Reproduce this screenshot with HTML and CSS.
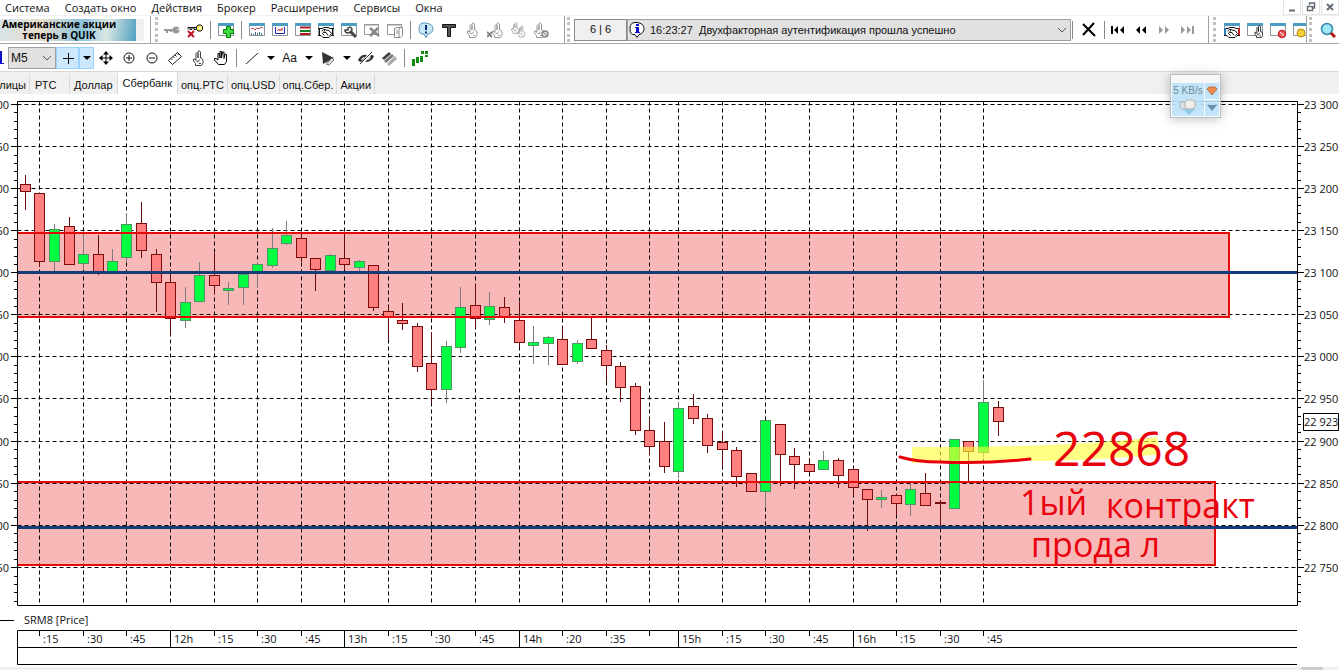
FILE: index.html
```html
<!DOCTYPE html>
<html lang="ru">
<head>
<meta charset="utf-8">
<title>QUIK</title>
<link rel="stylesheet" href="styles.css">
</head>
<body>
<svg class="sprite" aria-hidden="true">
  <defs>
    <symbol id="hand" viewBox="0 0 16 16"><path d="M5.500 15.500V13.500L3.500 11V9H5l1 1.500V3.500L7 2.500l1 1V8M8 8V2l1-1.500L10.500 2v6M10.500 8l1.500.500 1 1.500v3l-1.500 2.500h-6M6.500 11.500h2l1-2M9 13.500h2" fill="#fff" stroke="currentColor"/></symbol>
    <symbol id="win" viewBox="0 0 16 16"><path d="M.5 1.500h15v12H.5z" fill="#fff" stroke="#8b9298"/><path d="M0 1h16v3H0z" fill="#4d9cc4"/></symbol>
    <symbol id="shake" viewBox="0 0 16 16"><path d="M1 6h14v9H1z" fill="#fff"/><path d="M0 6.500h4l2-1h4l2 1h4M0 13.500h3l2 2h6l2-2h3M3.500 9l2-1.500h2L4.500 11.500l2 2M8 8l3 .5 2.500 3-2 2M6 10.500h2l2 3M1.500 7v6M14.500 7v6" fill="none" stroke="#111"/></symbol>
    <symbol id="down" viewBox="0 0 8 8"><path d="M0 2h8L4 6z"/></symbol>
    <symbol id="chev" viewBox="0 0 10 10"><path d="M1 3l4 4 4-4" fill="none" stroke="#555"/></symbol>
  </defs>
</svg>

<header class="menubar">
  <nav class="menu">
    <button>Система</button><button>Создать окно</button><button>Действия</button><button>Брокер</button><button>Расширения</button><button>Сервисы</button><button>Окна</button>
  </nav>
  <div class="winctl">
    <button aria-label="Свернуть"><svg viewBox="0 0 10 10"><path d="M2 8.500h6" stroke="#666e78" stroke-width="2"/></svg></button>
    <button aria-label="Восстановить"><svg viewBox="0 0 10 10"><path d="M3.500 3V1h5v5H6.500M1.500 4.500h5v4h-5z" fill="none" stroke="#666e78" stroke-width="1.500"/></svg></button>
    <button aria-label="Закрыть"><svg viewBox="0 0 10 10"><path d="M2 2l6 6M8 2L2 8" stroke="#666e78" stroke-width="2"/></svg></button>
  </div>
</header>

<div class="bar">
  <section class="panel banner-panel">
    <a class="banner" href="#">Американские акции<br>теперь в QUIK</a>
  </section>
  <section class="panel windows">
    <i class="grip"></i>
    <button class="tool" aria-label="Ключ"><svg viewBox="0 0 16 16"><path d="M0 7h10v2H8v1H6V9H4v2H2V9H0z" fill="#999"/><circle cx="12" cy="8" r="3.500" fill="#999"/><path d="M13 7h2v1h-2z" fill="#eee"/></svg></button>
    <button class="tool" aria-label="Отключить"><svg viewBox="0 0 16 16"><path d="M1 7.500V5.500h9M1 5.500h2v2h2v-2h2v2h2" fill="none" stroke="#111"/><path d="M9.500 4.500l1.500-1.500h3l1.500 1.500v3L14 9h-3L9.500 7.500z" fill="#f5ee5a" stroke="#111"/><path d="M12 5h2v2h-2z" fill="#fff"/><path d="M1 9l6 6M7 9l-6 6" stroke="#c01020" stroke-width="2"/></svg></button>
    <i class="sep"></i>
    <button class="tool" aria-label="Создать"><svg viewBox="0 0 16 16"><use href="#win"/><path d="M8.500 4.500h4v3h3v4h-3v4h-4v-4h-3v-4h3z" fill="#3fdc3f" stroke="#087808"/></svg></button>
    <i class="sep"></i>
    <button class="tool" aria-label="График"><svg viewBox="0 0 16 16"><use href="#win"/><path d="M2 7l2-1 2 2 2-2 2 1 2-2 2 1" fill="none" stroke="#b44"/><path d="M2.500 13v-2M4.500 13v-1M6.500 13v-3M8.500 13v-2M10.500 13v-3M12.500 13v-2" stroke="#3a6f90"/></svg></button>
    <button class="tool" aria-label="Диаграмма"><svg viewBox="0 0 16 16"><use href="#win"/><path d="M3.500 5v6.500h9V5" fill="none" stroke="#22b"/><path d="M5 9l2-2 1 2 2-3v3" fill="none" stroke="#c33"/></svg></button>
    <button class="tool" aria-label="Таблица"><svg viewBox="0 0 16 16"><use href="#win"/><path d="M5 5.500h10M5 12h10" stroke="#b01818" stroke-width="2"/><path d="M5 9h10" stroke="#108020" stroke-width="2"/></svg></button>
    <button class="tool" aria-label="Сделки"><svg viewBox="0 0 16 16"><use href="#win"/><use href="#shake"/></svg></button>
    <button class="tool" aria-label="Настройка"><svg viewBox="0 0 16 16"><use href="#win"/><path d="M9 9l6 6" stroke="#444" stroke-width="3"/><path d="M7 5v3h-3q0 3 3 3 4 0 4-4-1-2-3-2" fill="none" stroke="#444" stroke-width="1.500"/></svg></button>
    <button class="tool dim" aria-label="Удалить окно"><svg viewBox="0 0 16 16"><path d="M.5 2.500h14v10H.5zM0 3h15" fill="none" stroke="#999"/><path d="M6 6l9 8M14 6l-8 8" stroke="#888" stroke-width="2.500"/></svg></button>
    <button class="tool dim" aria-label="Копировать окно"><svg viewBox="0 0 16 16"><path d="M.5 2.500h14v10H.5zM0 3h15" fill="none" stroke="#999"/><path d="M7.500 6.500l3-1h5v8l-2 2h-6zM12 6v9M9 9h2M9 11h2" fill="#fff" stroke="#888"/></svg></button>
    <i class="sep"></i>
    <button class="tool" aria-label="Сообщения"><svg viewBox="0 0 16 16"><path d="M6 12l2 3.500 2-3.500q5-1 5-5.500T8 1 1 6.500 6 12z" fill="#c9e8fa" stroke="#5a94b8"/><path d="M8 3v5M8 9.500v2" stroke="#0a2670" stroke-width="2"/></svg></button>
    <button class="tool" aria-label="Текст"><svg viewBox="0 0 16 16"><path d="M1.500 2.500h13v3h-5v9h-3v-9h-5z" fill="#555" stroke="#111"/></svg></button>
    <button class="tool dim" aria-label="Заявка"><svg viewBox="0 0 16 16"><use href="#hand"/></svg></button>
    <button class="tool dim" aria-label="Снять заявку"><svg viewBox="0 0 16 16"><use href="#hand" x="2"/><path d="M0 10l5 5M5 10l-5 5" stroke="#888" stroke-width="2"/></svg></button>
    <button class="tool dim" aria-label="Две заявки"><svg viewBox="0 0 16 16"><use href="#hand" x="-1" y="0" width="12" height="12"/><use href="#hand" x="5" y="3" width="12" height="13"/></svg></button>
    <button class="tool dim" aria-label="Запрет заявок"><svg viewBox="0 0 16 16"><use href="#hand" x="-2"/><circle cx="12" cy="12" r="3" fill="#ddd" stroke="#888" stroke-width="1.500"/><path d="M10 10l4 4" stroke="#888"/></svg></button>
  </section>
  <section class="panel messages">
    <i class="grip"></i>
    <output class="counter">6 | 6</output>
    <div class="pick log">
      <select aria-label="Сообщения системы"><option>16:23:27&nbsp; Двухфакторная аутентификация прошла успешно</option></select>
      <svg class="info" viewBox="0 0 16 16"><path d="M6 12.500l2 3 2-3q5-1 5-6T8 .5 1 6.500t5 6z" fill="#fff" stroke="#111"/><path d="M7 2h3v2H7zM6 5h4v5h1v1H6v-1h1V6H6z" fill="#11c"/></svg>
      <svg class="chev"><use href="#chev"/></svg>
    </div>
    <i class="sep thin"></i>
    <button class="tool wide" aria-label="Очистить"><svg viewBox="0 0 16 16"><path d="M2 2l12 12M13 1L2 13" stroke="#000" stroke-width="2"/></svg></button>
    <i class="sep thin"></i>
    <button class="tool" aria-label="В начало"><svg viewBox="0 0 16 16"><path d="M1 4h2v8H1zM8 4v8L4 8zM14 4v8l-4-4z"/></svg></button>
    <button class="tool" aria-label="Назад"><svg viewBox="0 0 16 16"><path d="M7 4v8L3 8zM13 4v8L9 8z"/></svg></button>
    <button class="tool" aria-label="Вперёд"><svg viewBox="0 0 16 16"><path d="M3 4v8l4-4zM9 4v8l4-4z" fill="#999"/></svg></button>
    <button class="tool" aria-label="В конец"><svg viewBox="0 0 16 16"><path d="M2 4v8l4-4zM8 4v8l4-4zM13 4h2v8h-2z" fill="#999"/></svg></button>
  </section>
  <section class="panel trade">
    <i class="grip"></i>
    <button class="tool" aria-label="Сделки клиента"><svg viewBox="0 0 16 16"><use href="#win"/><use href="#shake"/><path d="M0 6h2v7H0z" fill="#2b7fb0"/><path d="M14 6h2v7h-2z" fill="#c22"/></svg></button>
    <button class="tool" aria-label="Заявки клиента"><svg viewBox="0 0 16 16"><use href="#win"/><use href="#hand" x="5" y="3" width="13" height="13"/></svg></button>
    <button class="tool" aria-label="Запреты"><svg viewBox="0 0 16 16"><use href="#win"/><circle cx="12" cy="12" r="3.500" fill="#e66" stroke="#c22" stroke-width="1.500"/><path d="M10 10l4 4" stroke="#fff"/></svg></button>
    <button class="tool cut" aria-label="Лимиты"><svg viewBox="0 0 16 16"><use href="#win"/><circle cx="8" cy="11" r="4" fill="#f5cf3a" stroke="#b8860b"/></svg></button>
  </section>
  <section class="panel last">
    <i class="grip"></i>
    <button class="tool" aria-label="Поиск"><svg viewBox="0 0 16 16"><circle cx="7" cy="7" r="5.500" fill="#9fe6f7" stroke="#3788a8" stroke-width="1.500"/><path d="M11 11l4 4" stroke="#b01010" stroke-width="3"/></svg></button>
  </section>
</div>

<div class="bar second">
  <i class="stub"></i>
  <div class="pick period">
    <select aria-label="Интервал"><option>M5</option></select>
    <svg class="chev"><use href="#chev"/></svg>
  </div>
  <button class="tool on" aria-label="Перекрестие"><svg viewBox="0 0 16 16"><path d="M8.500 3v11M3 8.500h11" stroke="#000"/></svg></button>
  <button class="drop on" aria-label="Вид курсора"><svg><use href="#down"/></svg></button>
  <button class="tool" aria-label="Переместить"><svg viewBox="0 0 16 16"><path d="M8 2v12M2 8h12" stroke="#000"/><path d="M8 1L5 4.500h6zM8 15l-3-3.500h6zM1 8l3.500-3v6zM15 8l-3.500-3v6z"/></svg></button>
  <button class="tool" aria-label="Увеличить"><svg viewBox="0 0 16 16"><circle cx="8" cy="8" r="5" fill="none" stroke="#111"/><path d="M5 8h6M8 5v6" stroke="#111"/></svg></button>
  <button class="tool" aria-label="Уменьшить"><svg viewBox="0 0 16 16"><circle cx="8" cy="8" r="5" fill="none" stroke="#111"/><path d="M5 8h6" stroke="#111"/></svg></button>
  <button class="tool" aria-label="Линейка"><svg viewBox="0 0 16 16"><path d="M1.500 10.500l9-8 4 4-9 8zM4 8.500l1.500 1.500M6 6.500L7.500 8M8 5l1.500 1.500M10 3.500L11.500 5" fill="#fff" stroke="#222"/></svg></button>
  <button class="tool gray" aria-label="Указатель"><svg viewBox="0 0 16 16"><use href="#hand"/></svg></button>
  <button class="tool" aria-label="Рука"><svg viewBox="0 0 16 16"><path d="M5.500 14.500L1.500 10V8.500h1.500L5 10V3.500h1.500L7 8V1.500h1.500V8L9.500 2H11v6.500l1-4.500 1.500.5v7l-2 3z" fill="#fff" stroke="#000"/></svg></button>
  <i class="sep"></i>
  <button class="tool" aria-label="Линия"><svg viewBox="0 0 16 16"><path d="M2 14L14 3" stroke="#222"/></svg></button>
  <button class="drop" aria-label="Виды линий"><svg><use href="#down"/></svg></button>
  <button class="tool text">Aa</button>
  <button class="drop" aria-label="Виды подписей"><svg><use href="#down"/></svg></button>
  <button class="tool" aria-label="Фигура"><svg viewBox="0 0 16 16"><path d="M2 2l12 6-11 6z" fill="#333"/><path d="M6 14l6-6 2 2-5 5z" fill="#ddd" stroke="#777"/></svg></button>
  <button class="drop" aria-label="Виды фигур"><svg><use href="#down"/></svg></button>
  <button class="tool" aria-label="Скрыть"><svg viewBox="0 0 16 16"><path d="M0 10q3-6 9-5L5 10l-2 2q-2 0-3-2zM16 6q-2 6-9 6l5-5 1-2q2 0 3 1z" fill="#333"/><path d="M3 10q1-3 4-3L4 10zM9 10l4-3q-1 3-4 3z" fill="#fff"/><path d="M2 14L14 2" stroke="#333"/></svg></button>
  <button class="tool" aria-label="Удалить линии"><svg viewBox="0 0 16 16"><path d="M1 8l7-6 2 2-7 6z" fill="#444"/><path d="M3 11l8-7 2 2-8 7z" fill="#777"/><path d="M6 14l8-8 2 3-8 7z" fill="#aaa"/></svg></button>
  <i class="sep"></i>
  <button class="tool" aria-label="Свечи"><svg viewBox="0 0 16 16"><path d="M0 9h3v7H0zM4 7h3v6H4zM8 6h3v6H8zM9 1h3v3H9zM13 1h3v3h-3zM13 5h3v2h-3z" fill="#128a12"/></svg></button>
</div>

<nav class="tabs" aria-label="Вкладки">
  <button class="edge">Таблицы</button><button class="short">РТС</button><button class="mid">Доллар</button><button class="active" aria-current="page">Сбербанк</button><button>опц.РТС</button><button>опц.USD</button><button>опц.Сбер.</button><button>Акции</button>
</nav>

<main class="chart">
  <svg id="chart" viewBox="0 94 1339 573" role="img" aria-label="SRM8 [Price]"></svg>
</main>
<div class="scroll"><i></i></div>

<aside class="traffic">
  <span class="speed">5 KB/s
    <svg viewBox="0 0 18 16"><path d="M4 10h12l-6 6z" fill="#8ccbed"/><rect x="1" y="3" width="8" height="7" rx="2" fill="#dde3e8" stroke="#a8b4bd"/><rect x="6" y="1" width="10" height="9" rx="3" fill="#f1eeea" stroke="#b2b2b2"/></svg>
  </span>
  <button aria-label="Сеть"><svg viewBox="0 0 12 10"><path d="M1 3l2-2h6l2 2-5 6z" fill="#ef8a48" stroke="#b8714a"/></svg></button>
  <button aria-label="Меню"><svg viewBox="0 0 12 10"><path d="M1 2h10L6 8z" fill="#6691ab"/></svg></button>
</aside>
<script src="chart.js"></script>
</body>
</html>
```
FILE: styles.css
```css
* { box-sizing: border-box; }
body { margin: 0; background: #fff; color: #111; font: 11px/14px "Liberation Sans", Arial, sans-serif; position: relative; overflow-x: hidden; }
button { border: 0; background: none; padding: 0; margin: 0; font: inherit; color: inherit; }
select { appearance: none; border: 1px solid #a0a0a0; border-radius: 0; background: #e1e1e1; font: inherit; color: #111; width: 100%; height: 22px; grid-area: 1 / 1; }
.sprite { position: absolute; width: 0; height: 0; }

.menubar { display: flex; justify-content: space-between; height: 15px; }
.menu { display: flex; gap: 15px; padding-left: 5px; font: 11px/15px "Open Sans", "Noto Sans", sans-serif; }
.winctl { display: flex; gap: 1px; }
.winctl button { width: 18px; border: 1px solid #e4e4e4; border-top: 0; display: grid; place-items: center; }
.winctl svg { width: 10px; height: 10px; }

.bar { display: flex; height: 29px; background: #fff; border-top: 1px solid #f0f0f0; border-bottom: 1px solid #a8a8a8; }
.second { height: 28px; border-top: 0; border-bottom-color: #d8d8d8; align-items: center; }
.panel { display: flex; align-items: center; border-right: 1px solid #a0a0a0; padding-right: 10px; flex: none; }
.banner-panel { padding-right: 6px; margin-right: 2px; }
.banner { width: 144px; height: 22px; border-right: 8px solid #f0f0f0; background: linear-gradient(100deg, #d5e4ea, #e9ddce 30%, #8cc3dc 60%, #d9e6e4 78%, #4f9fbf); color: #000; text-decoration: none; text-align: center; font: bold 10px/11px "Open Sans", sans-serif; white-space: nowrap; padding-right: 18px; }
.grip { width: 3px; height: 25px; margin: 0 4px 0 2px; border-left: 3px dotted #c0c0c0; flex: none; }
.windows { padding-right: 12px; }
.windows .grip { margin-right: 2px; }
.sep { width: 1px; height: 18px; margin: 0 3px 0 4px; background: #8a8a8a; flex: none; }
.thin { margin: 0 1px; }
.tool { width: 23px; height: 23px; display: grid; place-items: center; flex: none; }
.tool svg { width: 16px; height: 16px; }
.wide { width: 29px; }
.text { font-size: 12px; }
.dim { color: #999; }
.gray { color: #444; }
.cut { width: 17px; overflow: hidden; justify-items: start; }
.cut svg { margin-left: 4px; width: 16px; }
.messages { flex: 1; }
.trade, .last { padding-right: 0; }
.trade { padding-left: 2px; }
.last { border-right: 0; }
.counter { width: 53px; height: 22px; border: 1px solid #8a8a8a; background: #f0f0f0; font-size: 11px; line-height: 19px; text-align: center; flex: none; }
.pick { display: grid; align-items: center; }
.pick svg { grid-area: 1 / 1; pointer-events: none; }
.chev { width: 10px; height: 10px; justify-self: end; margin-right: 4px; }
.log { flex: 1; }
.log select { padding-left: 22px; }
.info { width: 16px; height: 16px; margin-left: 2px; }
.stub { width: 4px; height: 13px; background: linear-gradient(90deg, #11c 2px, #fff 2px); border-bottom: 1px solid #11c; margin-right: 4px; }
.period { width: 48px; font-size: 12px; }
.period select { padding-left: 2px; }
.drop { width: 15px; height: 22px; display: grid; place-items: center; }
.drop svg { width: 8px; height: 8px; }
.on { background: #cce8ff; border: 1px solid #99d1ff; height: 22px; }

.tabs { display: flex; align-items: flex-end; height: 22px; background: #f0f0f0; }
.tabs button { height: 20px; padding: 0 3px; border-right: 1px solid #d9d9d9; line-height: 22px; white-space: nowrap; }
.tabs .edge { width: 30px; overflow: hidden; display: flex; justify-content: flex-end; }
.tabs .short { width: 40px; text-align: left; padding-left: 5px; }
.tabs .mid { padding: 0 4px; }
.tabs .active { height: 22px; background: #fff; padding: 0 5px; }

.chart svg { display: block; width: 100%; height: auto; }
.axis { font: 11px "Open Sans", "Noto Sans", sans-serif; fill: #111; }
.ink { font: 48px "Open Sans", "Noto Sans", sans-serif; fill: #e8000c; }
.note { font-size: 34px; }
.line { stroke: #000; fill: none; }
.grid { stroke: #000; fill: none; stroke-dasharray: 4 3; }
.zone { fill: #f9b8b8; }
.edge-line { fill: none; stroke: #e60b0b; stroke-width: 2; }
.level { stroke: #143c78; stroke-width: 3; }
.down { fill: #ff8080; stroke: #7a0c0c; }
.up { fill: #00ff40; stroke: #4e9464; }
.wick-up { stroke: #7d7d7d; }
.wick-down { stroke: #6b0c0c; }
.mark { fill: #ffff38; opacity: .62; }
.pen { fill: none; stroke: #e8000c; stroke-width: 3; stroke-linecap: round; }
.scroll { height: 3px; background: #f0f0f0; display: flex; justify-content: flex-end; padding-right: 16px; }
.scroll i { width: 22px; background: #cdcdcd; }

.traffic { position: absolute; top: 74px; right: 118px; width: 51px; height: 44px; padding: 8px 1px 1px; border: 1px solid #b9c0c4; background: rgba(250, 250, 250, .7); box-shadow: 0 1px 10px rgba(0, 0, 0, .25); display: grid; grid-template: 1fr 1fr / 1fr 14px; gap: 1px; font-size: 10px; line-height: 11px; color: #6f8896; }
.traffic button, .speed { background: rgba(176, 222, 250, .75); display: grid; place-items: center; }
.traffic button svg { width: 12px; height: 10px; }
.speed { grid-row: 1 / 3; white-space: nowrap; }
.speed svg { width: 18px; height: 16px; }
```
FILE: chart.js
```js
const svg = document.getElementById('chart');
const parts = [];
const LEFT = 17.5, RIGHT = 1297.5, TOP = 101.5, BOTTOM = 605.5;

const prices = [[104, '23 300'], [146, '23 250'], [188, '23 200'], [230, '23 150'], [272, '23 100'], [314, '23 050'],
  [356, '23 000'], [398, '22 950'], [441, '22 900'], [483, '22 850'], [525, '22 800'], [567, '22 750']];
const times = [[39, ':15'], [83, ':30'], [126, ':45'], [170, '12h'], [214, ':15'], [257, ':30'], [301, ':45'], [344, '13h'],
  [388, ':15'], [431, ':30'], [475, ':45'], [519, '14h'], [562, ':20'], [606, ':35'], [649, ''], [678, '15h'], [722, ':15'],
  [765, ':30'], [809, ':45'], [853, '16h'], [896, ':15'], [940, ':30'], [983, ':45']];

// high, body top, body bottom, low, rising
const candles = [
  [175,184,191,210,0],[193,193,261,267,0],[224,229,261,271,1],[217,226,264,264,0],[235,254,263,270,1],[235,254,272,275,0],
  [249,261,272,274,1],[214,224,257,262,1],[202,223,250,258,0],[249,254,282,312,0],[272,282,318,335,0],[287,302,320,328,1],
  [262,275,301,301,1],[253,275,285,294,0],[282,288,290,305,1],[272,274,287,305,1],[262,264,272,288,1],[228,248,265,268,1],
  [221,235,243,245,1],[233,238,257,262,0],[258,258,269,291,0],[254,255,270,272,1],[234,258,264,270,0],[260,261,267,271,1],
  [265,265,307,311,0],[306,311,316,340,0],[303,320,323,330,0],[323,326,366,372,0],[332,363,389,403,0],[341,346,389,403,1],
  [287,307,347,353,1],[284,305,318,328,0],[292,306,319,325,1],[297,307,317,323,0],[302,320,342,347,0],[326,342,345,364,1],
  [336,337,343,365,1],[326,339,364,364,0],[340,343,361,364,1],[317,339,348,348,0],[345,350,365,382,0],[362,366,387,402,0],
  [383,386,430,435,0],[418,430,446,455,0],[422,441,466,473,0],[403,408,471,478,1],[394,406,418,424,0],[414,418,445,453,0],
  [431,442,449,468,0],[447,450,476,487,0],[473,473,491,491,0],[420,420,491,507,1],[424,424,454,486,0],[448,456,464,489,0],
  [458,464,471,473,0],[451,460,469,469,1],[458,460,475,488,0],[467,469,487,496,0],[489,489,499,531,0],[490,497,499,508,1],
  [494,495,503,515,0],[484,489,504,516,1],[473,493,505,505,0],[500,502,503,526,0],[439,439,508,509,1],[441,441,451,482,0],
  [380,402,452,457,1],[401,407,421,436,0]];

const line = (x1, y1, x2, y2, cls = 'line') =>
  parts.push(`<path class="${cls}" d="M${x1} ${y1}L${x2} ${y2}"/>`);
const text = (x, y, value, cls = 'axis') => parts.push(`<text class="${cls}" x="${x}" y="${y}">${value}</text>`);

parts.push('<path class="zone" d="M18 233H1229V317H18zM18 482H1215V565H18z"/>');
prices.forEach(([y]) => line(LEFT, y + .5, RIGHT, y + .5, 'grid'));
times.forEach(([x]) => line(x + .5, TOP, x + .5, BOTTOM, 'grid'));

candles.forEach(([high, top, bottom, low, up], i) => {
  // a candle that falls on a time mark is centred on its grid line
  const raw = Math.round(25 + 14.515 * i);
  const mark = times.find(([t]) => Math.abs(t - raw) < 2);
  const x = (mark ? mark[0] : raw) + .5;
  line(x, high, x, low, up ? 'wick-up' : 'wick-down');
  parts.push(`<rect class="${up ? 'up' : 'down'}" x="${x - 5}" y="${top + .5}" width="10" height="${bottom - top}"/>`);
});

parts.push('<path class="edge-line" d="M18 233H1229V317H18M18 482H1215V565H18"/>');
line(18, 272.5, 1297, 272.5, 'level');
line(18, 527.5, 1297, 527.5, 'level');

parts.push(`<path class="line" d="M${LEFT} ${TOP}H${RIGHT}V${BOTTOM}H${LEFT}z"/>`);
for (let i = 0; i < 60; i++) {
  const y = Math.round(104 + i * 8.42) + .5;
  if (i % 5 && y < BOTTOM) {
    line(14, y, 17, y);
    line(1298, y, 1301, y);
  }
}
prices.forEach(([y, label]) => {
  line(11, y + .5, 17, y + .5);
  line(1298, y + .5, 1304, y + .5);
  text(1304, y + 5, label);
  parts.push(`<text class="axis" text-anchor="end" x="9" y="${y + 5}">${label}</text>`);
});
parts.push('<path d="M1303.5 413.5H1338.5V430.5H1303.5z" fill="#fff" stroke="#000"/>');
text(1304, 426, '22 923');

line(0, 620.5, 14, 620.5);
text(24, 624, 'SRM8 [Price]');
parts.push('<path class="line" d="M1297 630.5H17.5V664.5H1297M17.500 647.500H1297"/>');
times.forEach(([x, label]) => {
  line(x + .5, 631, x + .5, label.endsWith('h') ? 647 : 636);
  text(x + 4, 643, label);
});

parts.push('<path class="mark" d="M912 447Q1060 448 1157 437L1160 454Q1090 462 1000 461L912 463z"/>');
parts.push('<path class="pen" d="M900 457Q917 462 940 462Q985 464 1030 459"/>');
text(1053, 466, '22868', 'ink');
text(1020, 515, '1ый', 'ink note');
text(1106, 518, 'контракт', 'ink note');
text(1031, 557, 'прода л', 'ink note');
svg.innerHTML = parts.join('');
```
